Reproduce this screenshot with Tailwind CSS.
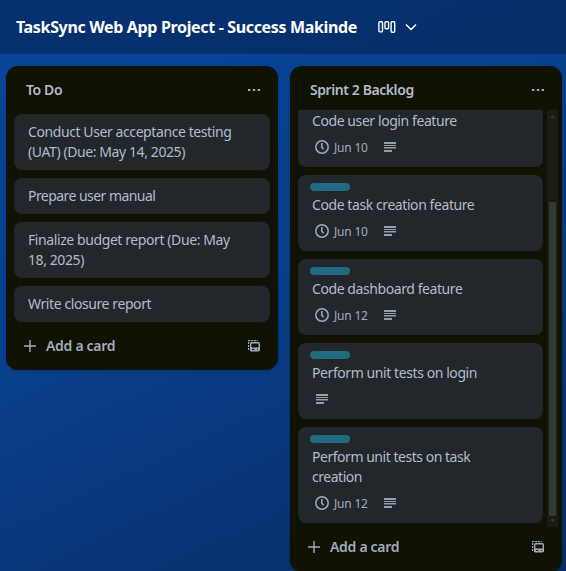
<!DOCTYPE html>
<html lang="en">
<head>
<meta charset="utf-8">
<title>TaskSync Web App Project</title>
<script src="https://cdn.jsdelivr.net/npm/@tailwindcss/browser@4"></script>
</head>
<body class="w-[566px] h-[571px] overflow-hidden font-['Noto_Sans','Open_Sans',sans-serif] text-[14px] leading-5 text-[#b1bccb] bg-[linear-gradient(155deg,#09469c_0%,#093f8c_45%,#082c63_100%)]">
<svg class="hidden">
  <symbol id="clock" viewBox="0 0 16 16"><circle cx="8" cy="8" r="6.2" fill="none" stroke="currentColor" stroke-width="1.5"/><path d="M7.8 4v4.3l1.8 1.9" fill="none" stroke="currentColor" stroke-width="1.5"/></symbol>
  <symbol id="lines" viewBox="0 0 12 10"><path d="M0 0h12v2H0zM0 3h12v1H0zM0 5h12v1.4H0zM0 8h8v2H0z" fill="currentColor" fill-opacity=".9"/></symbol>
  <symbol id="plus" viewBox="0 0 12 12"><path d="M6 0v12M0 6h12" fill="none" stroke="currentColor" stroke-width="1.4"/></symbol>
  <symbol id="dots" viewBox="0 0 12 4"><path d="M0 1h2.3v2H0zM4.9 1h2.3v2H4.9zM9.7 1H12v2H9.7z" fill="currentColor"/></symbol>
  <symbol id="template" viewBox="0 0 12 12"><path d="M.6 10V.6H10" fill="none" stroke="currentColor" stroke-width="1.2" stroke-dasharray="2 1"/><rect x="2.7" y="2.7" width="8.6" height="8.1" rx="1" fill="none" stroke="currentColor" stroke-width="1.4"/><path fill-rule="evenodd" d="M2.5 7.5h9V11h-9zM4 9v1h2.5V9zM9 9v1h1V9z" fill="currentColor"/></symbol>
</svg>
<div class="h-full flex flex-col">
  <header class="h-[54px] shrink-0 flex items-center pl-4 bg-[#041c45]/50 text-white">
    <h1 class="w-[341px] whitespace-nowrap font-bold text-[16px] tracking-[-0.34px]">TaskSync Web App Project - Success Makinde</h1>
    <svg class="ml-[21px] w-[18px] h-3" viewBox="0 0 18 12" fill="none" stroke="currentColor" stroke-width="1.4"><rect x=".9" y=".7" width="3.6" height="10.2" rx="1"/><rect x="7" y=".7" width="3.6" height="7" rx="1"/><rect x="13.1" y=".7" width="3.6" height="10.6" rx="1"/></svg>
    <svg class="ml-[9px] w-3 h-3" viewBox="0 0 12 12" fill="none" stroke="currentColor" stroke-width="1.5"><path d="M1 3.5l5 5 5-5"/></svg>
  </header>
  <main class="flex items-start gap-3 pt-3 pl-1.5">
    <section class="w-[272px] h-[304px] shrink-0 rounded-xl bg-[#101204] shadow-sm px-2 flex flex-col">
      <div class="h-12 flex items-center justify-between pl-3 pr-2.5">
        <h2 class="font-semibold tracking-[-0.4px]">To Do</h2>
        <svg class="w-3 h-1 text-[#9fadbc]"><use href="#dots"/></svg>
      </div>
      <div class="flex flex-col gap-2 tracking-[-0.41px]">
        <div class="rounded-lg bg-[#22272b] py-2 pl-3.5">Conduct User acceptance testing<br>(UAT) (Due: May 14, 2025)</div>
        <div class="rounded-lg bg-[#22272b] py-2 pl-3.5 tracking-[-0.55px]">Prepare user manual</div>
        <div class="rounded-lg bg-[#22272b] py-2 pl-3.5">Finalize budget report (Due: May<br>18, 2025)</div>
        <div class="rounded-lg bg-[#22272b] py-2 pl-3.5">Write closure report</div>
      </div>
      <div class="h-12 flex items-center pl-2.5 pr-2.5 text-[#9fadbc]">
        <svg class="w-3 h-3"><use href="#plus"/></svg>
        <span class="ml-2.5 font-semibold tracking-[-0.3px]">Add a card</span>
        <svg class="ml-auto w-3 h-3"><use href="#template"/></svg>
      </div>
    </section>
    <section class="w-[272px] h-[506px] shrink-0 rounded-xl bg-[#101204] shadow-sm pl-2 flex flex-col">
      <div class="h-11 shrink-0 pt-1 flex items-center justify-between pl-3 pr-[18px]">
        <h2 class="font-semibold tracking-[-0.42px]">Sprint 2 Backlog</h2>
        <svg class="w-3 h-1 text-[#9fadbc]"><use href="#dots"/></svg>
      </div>
      <div class="h-[417px] shrink-0 flex overflow-hidden">
        <div class="w-[245px] -mt-[19px] flex flex-col gap-2 tracking-[-0.42px]">
          <article class="h-[76px] shrink-0 rounded-lg bg-[#22272b] pt-2 pl-3">
            <div class="w-10 h-2 rounded-full bg-[#206b82]"></div>
            <p class="mt-1 ml-0.5">Code user login feature</p>
            <div class="mt-1.5 ml-1 h-5 flex items-center text-[12px] text-[#9fadbc] tracking-[-0.2px]"><svg class="w-4 h-4"><use href="#clock"/></svg><span class="ml-1 pt-px w-[34px] whitespace-nowrap">Jun 10</span><svg class="ml-4 w-3 h-2.5"><use href="#lines"/></svg></div>
          </article>
          <article class="h-[76px] shrink-0 rounded-lg bg-[#22272b] pt-2 pl-3">
            <div class="w-10 h-2 rounded-full bg-[#206b82]"></div>
            <p class="mt-1 ml-0.5">Code task creation feature</p>
            <div class="mt-1.5 ml-1 h-5 flex items-center text-[12px] text-[#9fadbc] tracking-[-0.2px]"><svg class="w-4 h-4"><use href="#clock"/></svg><span class="ml-1 pt-px w-[34px] whitespace-nowrap">Jun 10</span><svg class="ml-4 w-3 h-2.5"><use href="#lines"/></svg></div>
          </article>
          <article class="h-[76px] shrink-0 rounded-lg bg-[#22272b] pt-2 pl-3">
            <div class="w-10 h-2 rounded-full bg-[#206b82]"></div>
            <p class="mt-1 ml-0.5">Code dashboard feature</p>
            <div class="mt-1.5 ml-1 h-5 flex items-center text-[12px] text-[#9fadbc] tracking-[-0.2px]"><svg class="w-4 h-4"><use href="#clock"/></svg><span class="ml-1 pt-px w-[34px] whitespace-nowrap">Jun 12</span><svg class="ml-4 w-3 h-2.5"><use href="#lines"/></svg></div>
          </article>
          <article class="h-[76px] shrink-0 rounded-lg bg-[#22272b] pt-2 pl-3">
            <div class="w-10 h-2 rounded-full bg-[#206b82]"></div>
            <p class="mt-1 ml-0.5">Perform unit tests on login</p>
            <div class="mt-1.5 ml-1.5 h-5 flex items-center text-[#9fadbc]"><svg class="w-3 h-2.5"><use href="#lines"/></svg></div>
          </article>
          <article class="h-24 shrink-0 rounded-lg bg-[#22272b] pt-2 pl-3">
            <div class="w-10 h-2 rounded-full bg-[#206b82]"></div>
            <p class="mt-1 ml-0.5 tracking-[-0.47px]">Perform unit tests on task<br>creation</p>
            <div class="mt-1.5 ml-1 h-5 flex items-center text-[12px] text-[#9fadbc] tracking-[-0.2px]"><svg class="w-4 h-4"><use href="#clock"/></svg><span class="ml-1 pt-px w-[34px] whitespace-nowrap">Jun 12</span><svg class="ml-4 w-3 h-2.5"><use href="#lines"/></svg></div>
          </article>
        </div>
        <div class="ml-1 w-[11px] bg-[#1b1d14] flex flex-col items-center text-[#323a36]">
          <svg class="mt-[5px] w-[5px] h-[3px] shrink-0" viewBox="0 0 5 3"><path d="M0 3L2.5 0 5 3z" fill="currentColor"/></svg>
          <div class="mt-[84px] w-[7px] h-[314px] shrink-0 bg-[#323a36]"></div>
          <svg class="mt-[3px] w-[5px] h-[3px] shrink-0" viewBox="0 0 5 3"><path d="M0 0l2.5 3L5 0z" fill="currentColor"/></svg>
        </div>
      </div>
      <div class="h-10 flex items-center pl-2.5 pr-[18px] text-[#9fadbc]">
        <svg class="w-3 h-3"><use href="#plus"/></svg>
        <span class="ml-2.5 font-semibold tracking-[-0.3px]">Add a card</span>
        <svg class="ml-auto w-3 h-3"><use href="#template"/></svg>
      </div>
    </section>
  </main>
</div>
</body>
</html>
